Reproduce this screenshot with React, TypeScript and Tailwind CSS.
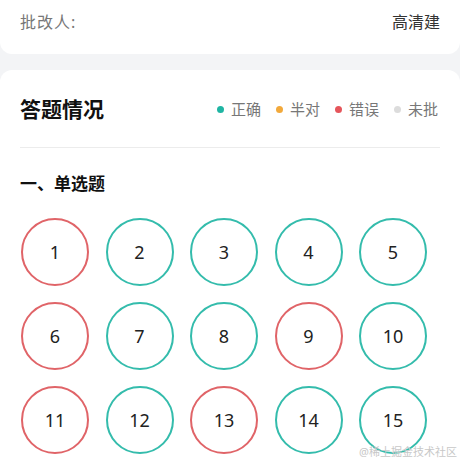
import React from "react";

type Status = "right" | "wrong";

const LEGEND = [
  { label: "正确", dot: "bg-[#1fb5a3]" },
  { label: "半对", dot: "bg-[#f2a93b]" },
  { label: "错误", dot: "bg-[#e5555b]" },
  { label: "未批", dot: "bg-[#dcdcdc]" },
];

const wrongSet = new Set([1, 6, 9, 11, 13]);

const questions: { no: number; status: Status }[] = Array.from({ length: 15 }, (_, i) => ({
  no: i + 1,
  status: wrongSet.has(i + 1) ? "wrong" : "right",
}));

function QuestionCircle({ no, status }: { no: number; status: Status }) {
  return (
    <div
      className={`w-[68px] h-[68px] rounded-full border-2 flex items-center justify-center text-[18px] text-[#222] ${
        status === "wrong" ? "border-[#e06468]" : "border-[#34bcac]"
      }`}
    >
      {no}
    </div>
  );
}

export default function App() {
  return (
    <div
      className="w-[460px] h-[460px] overflow-hidden bg-[#f3f4f6] relative"
      style={{ fontFamily: '"Noto Sans", "Noto Sans CJK SC", sans-serif' }}
    >
      <div className="bg-white h-[54px] rounded-b-[12px] px-5 pt-[10px] flex justify-between text-[16px] leading-6">
        <span className="text-[#777] tracking-[1px]">批改人:</span>
        <span className="text-[#333]">高清建</span>
      </div>

      <div className="mt-4 bg-white rounded-t-[12px] px-5 h-[400px]">
        <div className="h-[78px] pt-[2px] flex items-center justify-between border-b border-[#ececec]">
          <h2 className="text-[21px] font-bold text-[#111]">答题情况</h2>
          <div className="flex items-center gap-[15px] text-[15px] text-[#777] pr-[2px]">
            {LEGEND.map((item) => (
              <div key={item.label} className="flex items-center gap-[7px]">
                <span className={`w-[7px] h-[7px] rounded-full ${item.dot}`} />
                <span>{item.label}</span>
              </div>
            ))}
          </div>
        </div>

        <h3 className="mt-[24px] text-[17px] font-bold text-[#111] leading-6">一、单选题</h3>

        <div className="mt-[22px] grid grid-cols-[repeat(5,68px)] gap-x-[16.5px] gap-y-[16px] pl-px">
          {questions.map((q) => (
            <QuestionCircle key={q.no} no={q.no} status={q.status} />
          ))}
        </div>
      </div>

      <span className="absolute right-[3px] bottom-[3px] text-[11px] text-[#c8c8c8] leading-none">
        @稀土掘金技术社区
      </span>
    </div>
  );
}
